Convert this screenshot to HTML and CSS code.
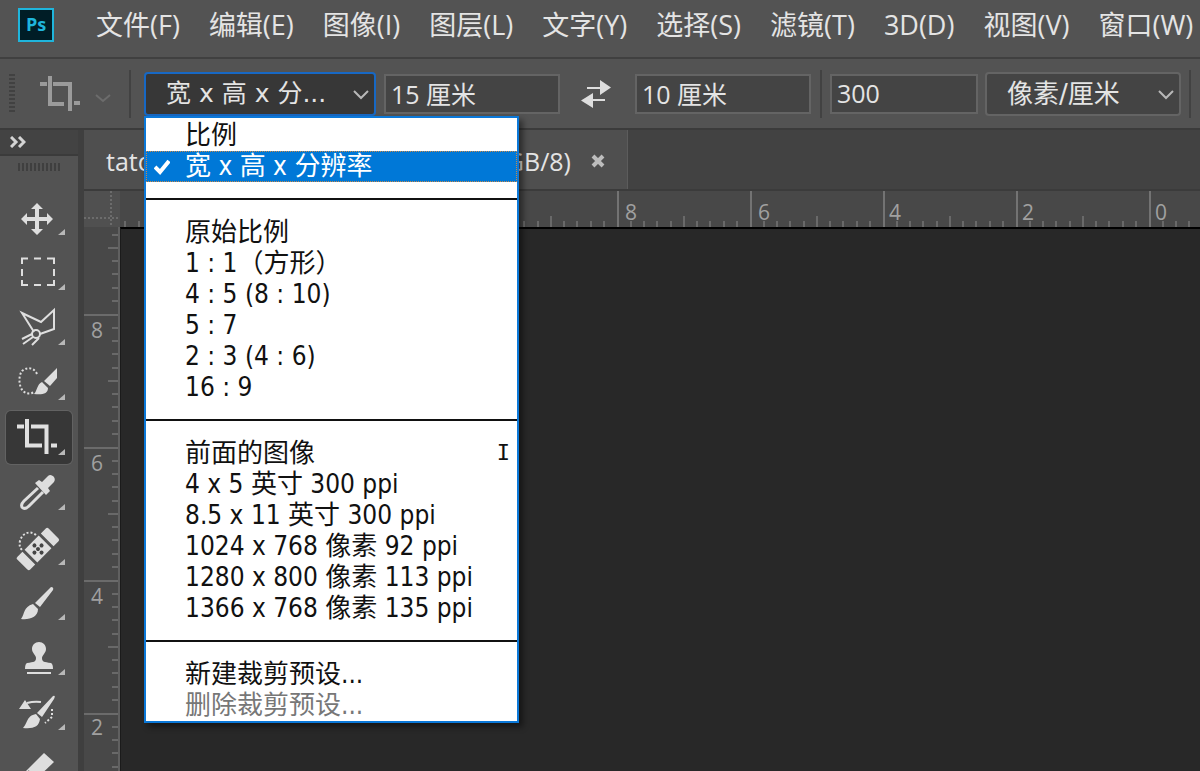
FILE: index.html
```html
<!DOCTYPE html>
<html lang="zh-CN">
<head>
<meta charset="utf-8">
<title>Photoshop</title>
<link rel="stylesheet" href="styles.css">
</head>
<body>
<div class="app">
  <header class="menubar">
    <svg class="logo" viewBox="0 0 36 34" role="img" aria-label="Ps">
      <rect x="1" y="1" width="34" height="32" fill="#001d26" stroke="#1fb5dc" stroke-width="2"/>
      <text x="18" y="23" text-anchor="middle" class="logo-text">Ps</text>
    </svg>
    <nav class="menus">
      <button>文件(F)</button>
      <button>编辑(E)</button>
      <button>图像(I)</button>
      <button>图层(L)</button>
      <button>文字(Y)</button>
      <button>选择(S)</button>
      <button>滤镜(T)</button>
      <button>3D(D)</button>
      <button>视图(V)</button>
      <button>窗口(W)</button>
    </nav>
  </header>

  <section class="options">
    <span class="grip"></span>
    <button class="current-tool" aria-label="裁剪工具">
      <svg width="72" height="40" viewBox="0 0 72 40">
        <path d="M0 10H7M13 10H30V37M10 2V30H24M34 29H40" fill="none" stroke="#9b9b9b" stroke-width="4"/>
        <path d="M56 21l7 6 7-6" fill="none" stroke="#6c6c6c" stroke-width="2"/>
      </svg>
    </button>
    <span class="divider"></span>
    <div class="combo ratio">
      <select class="open" aria-label="裁剪预设"><option>宽 x 高 x 分...</option></select>
      <svg class="chevron" viewBox="0 0 16 10"><path d="M1 1l7 7 7-7"/></svg>
      <ul class="popup" role="menu">
        <li><button role="menuitem">比例</button></li>
        <li><button role="menuitem" class="selected"><svg class="check" viewBox="0 0 16 16"><path d="M1 8l5 5 9-11" fill="none" stroke="#fff" stroke-width="4"/></svg>宽 x 高 x 分辨率</button></li>
        <li class="rule" role="separator"></li>
        <li><button role="menuitem">原始比例</button></li>
        <li><button role="menuitem">1 : 1（方形）</button></li>
        <li><button role="menuitem">4 : 5 (8 : 10)</button></li>
        <li><button role="menuitem">5 : 7</button></li>
        <li><button role="menuitem">2 : 3 (4 : 6)</button></li>
        <li><button role="menuitem">16 : 9</button></li>
        <li class="rule" role="separator"></li>
        <li><button role="menuitem">前面的图像<kbd>I</kbd></button></li>
        <li><button role="menuitem">4 x 5 英寸 300 ppi</button></li>
        <li><button role="menuitem">8.5 x 11 英寸 300 ppi</button></li>
        <li><button role="menuitem">1024 x 768 像素 92 ppi</button></li>
        <li><button role="menuitem">1280 x 800 像素 113 ppi</button></li>
        <li><button role="menuitem">1366 x 768 像素 135 ppi</button></li>
        <li class="rule" role="separator"></li>
        <li><button role="menuitem">新建裁剪预设...</button></li>
        <li><button role="menuitem" disabled>删除裁剪预设...</button></li>
      </ul>
    </div>
    <input class="field" aria-label="宽度" value="15 厘米">
    <button class="swap" aria-label="交换高度和宽度">
      <svg width="30" height="28" viewBox="0 0 30 28"><path d="M6 7H19V0L30 7.500L19 15V9H6ZM24 19H12V13L0 20.500L12 28V21H24Z" fill="#dedede"/></svg>
    </button>
    <input class="field" aria-label="高度" value="10 厘米">
    <span class="divider"></span>
    <input class="field resolution" aria-label="分辨率" value="300">
    <div class="combo unit">
      <select aria-label="单位"><option>像素/厘米</option></select>
      <svg class="chevron" viewBox="0 0 16 10"><path d="M1 1l7 7 7-7"/></svg>
    </div>
    <span class="divider"></span>
  </section>

  <div class="workspace">
    <aside class="toolbar">
      <button class="collapse" aria-label="展开面板">
        <svg width="16" height="12" viewBox="0 0 16 12"><path d="M1 1l5 5-5 5M9 1l5 5-5 5" fill="none" stroke="#d4d4d4" stroke-width="3"/></svg>
      </button>
      <span class="tool-grip"></span>
      <div class="tools">
        <button aria-label="移动工具"><svg viewBox="0 0 66 53"><path d="M31 12l6 6h-4v8h8v-4l6 6-6 6v-4h-8v8h4l-6 6-6-6h4v-8h-8v4l-6-6 6-6v4h8v-8h-4z"/><path class="corner" d="M59 38v6h-7z"/></svg></button>
        <button aria-label="选框工具"><svg viewBox="0 0 66 53"><path class="line" d="M16 18V12.500H22M28 12.500H35M41 12.500H48V18M48 23V30M48 34V39H41M35 39H28M22 39H16V34M16 30V23"/><path class="corner" d="M59 38v6h-7z"/></svg></button>
        <button aria-label="套索工具"><svg viewBox="0 0 66 53"><path class="line" d="M28 31L16 12L35 21L48 9V28L34 33M26 33L16 38M27 36L17 43M33 37L26 44"/><circle class="line" cx="30" cy="33" r="4"/><path class="corner" d="M59 38v6h-7z"/></svg></button>
        <button aria-label="快速选择工具"><svg viewBox="0 0 66 53"><path class="dots" d="M31 18C28 11 20 11 16 15C12 20 13 31 17 35C20 38 25 38 28 36"/><path d="M51 12V22L44 30L38 25ZM36 26L42 32C42 38 36 39 28 38C31 35 31 28 36 26Z"/><path class="corner" d="M59 38v6h-7z"/></svg></button>
        <button class="active" aria-label="裁剪工具"><svg viewBox="0 0 66 53"><path d="M11 15.500H18M25 15.500H40.500V43M21 8V34.500H36M45 34.500H51" fill="none" stroke="#e0e0e0" stroke-width="4"/><path class="corner" d="M59 38v6h-7z"/></svg></button>
        <button aria-label="吸管工具"><svg viewBox="0 0 66 53"><path class="line wide" d="M32 22L18 35C15 38 15 41 17 42C19 43 21 42 23 40L37 26"/><path d="M29 17L33 14L36 16L42 10C45 7 51 12 48 16L42 22L44 25L40 29Z"/><path class="corner" d="M59 38v6h-7z"/></svg></button>
        <button aria-label="修复画笔工具"><svg viewBox="0 0 66 53"><path class="dots" d="M30 14C24 9 16 12 14 20C13 24 14 27 16 29"/><g transform="translate(32 28) rotate(-45)"><path d="M-22-8Q-22-9-20-9H-13V9H-20Q-22 9-22 7ZM-10-9H10V9H-10ZM13-9H20Q22-9 22-7V7Q22 9 20 9H13Z"/><g fill="#444"><circle cx="0" cy="0" r="2"/><circle cx="-5" cy="0" r="2"/><circle cx="5" cy="0" r="2"/><circle cx="0" cy="-5" r="2"/><circle cx="0" cy="5" r="2"/></g></g><path class="corner" d="M59 38v6h-7z"/></svg></button>
        <button aria-label="画笔工具"><svg viewBox="0 0 66 53"><path d="M45 11Q48 11 47 14L34 31L29 27ZM27 28L32 33C32 41 24 44 15 43C19 38 17 31 27 28Z"/><path class="corner" d="M59 38v6h-7z"/></svg></button>
        <button aria-label="仿制图章工具"><svg viewBox="0 0 66 53"><path d="M33 11C37 11 40 14 40 18C40 22 36 24 36 27C36 31 38 31 45 32Q47 33 47 38H19Q19 33 21 32C28 31 30 31 30 27C30 24 26 22 26 18C26 14 29 11 33 11ZM21 41H45V43H21Z"/><path class="corner" d="M59 38v6h-7z"/></svg></button>
        <button aria-label="历史记录画笔工具"><svg viewBox="0 0 66 53"><path d="M47 10Q50 9 48 13L36 31L31 27ZM30 28L34 33C33 41 27 43 17 42C22 37 20 30 30 28ZM13 23L19 14L25 23Z"/><path class="line" d="M21 17Q28 15 35 16"/><path class="dots" d="M46 23V31L39 37"/><path class="corner" d="M59 38v6h-7z"/></svg></button>
        <button aria-label="橡皮擦工具"><svg viewBox="0 0 66 53"><path d="M38 12L48 21L25 43L14 36Z"/><path d="M22 30L29 36" stroke="#535353" stroke-width="2"/></svg></button>
      </div>
    </aside>

    <main class="document">
      <div class="tabs">
        <div class="tab">
          <span>tato</span>
          <span class="mode">(RGB/8)</span>
          <button aria-label="关闭"><svg width="14" height="14" viewBox="0 0 14 14"><path d="M2 2l10 10M12 2L2 12" stroke="#bdbdbd" stroke-width="4"/></svg></button>
        </div>
      </div>
      <div class="view">
        <div class="origin"><svg width="36" height="36" viewBox="0 0 36 36"><path d="M27 0V36M0 27H36" fill="none" stroke="#6c6c6c" stroke-width="2" stroke-dasharray="2 2"/></svg></div>
        <svg class="ruler-x">
          <defs><pattern id="px" x="-35" width="133" height="36" patternUnits="userSpaceOnUse">
            <path d="M1 0V36" stroke="#737373" stroke-width="2"/>
            <path d="M14 30V36M27 30V36M40 30V36M54 30V36M67 25V36M80 30V36M93 30V36M107 30V36M120 30V36" stroke="#696969" stroke-width="2"/>
          </pattern></defs>
          <rect width="100%" height="36" fill="url(#px)"/>
          <text x="505" y="29">8</text><text x="638" y="29">6</text><text x="769" y="29">4</text><text x="902" y="29">2</text><text x="1035" y="29">0</text>
        </svg>
        <svg class="ruler-y">
          <defs><pattern id="py" y="87" width="36" height="133" patternUnits="userSpaceOnUse">
            <path d="M0 1H36" stroke="#6b6b6b" stroke-width="2"/>
            <path d="M28 14H36M28 27H36M28 40H36M28 54H36M24 67H36M28 80H36M28 93H36M28 107H36M28 120H36" stroke="#696969" stroke-width="2"/>
          </pattern></defs>
          <rect width="36" height="100%" fill="url(#py)"/>
          <path d="M35 0V900" stroke="#606060" stroke-width="2"/>
          <text x="7" y="111">8</text><text x="7" y="244">6</text><text x="7" y="377">4</text><text x="7" y="508">2</text>
        </svg>
        <div class="canvas"></div>
      </div>
    </main>
  </div>
</div>
</body>
</html>
```
FILE: styles.css
```css
* {
  box-sizing: border-box;
}

body {
  margin: 0;
  background: #282828;
  color: #e4e4e4;
  font-family: "Open Sans", "Noto Sans CJK SC", sans-serif;
  font-size: 25px;
  line-height: 30px;
}

button,
input,
select {
  margin: 0;
  padding: 0;
  border: 0;
  background: none;
  color: inherit;
  font: inherit;
}

svg {
  display: block;
}

.app {
  display: flex;
  flex-direction: column;
  height: 100vh;
  overflow: hidden;
}

.menubar {
  display: flex;
  flex: none;
  align-items: center;
  height: 59px;
  padding: 0 0 8px 18px;
  border-bottom: 2px solid #404040;
  background: #535353;
}

.logo {
  flex: none;
  width: 36px;
  height: 34px;
}

.logo-text {
  fill: #1fb5dc;
  font-size: 18px;
  font-weight: 700;
}

.menus {
  display: flex;
  gap: 29px;
  margin-left: 42px;
  font-size: 27px;
  white-space: nowrap;
}

.options {
  display: flex;
  flex: none;
  align-items: center;
  height: 71px;
  padding-left: 9px;
  border-bottom: 2px solid #3b3b3b;
  background: #535353;
}

.grip {
  width: 6px;
  height: 40px;
  background: repeating-linear-gradient(#414141 0 2px, #535353 2px 4px);
}

.current-tool {
  margin-left: 25px;
}

.divider {
  flex: none;
  width: 2px;
  height: 48px;
  background: #424242;
}

.current-tool + .divider {
  margin: 0 13px 0 17px;
}

.combo {
  position: relative;
  flex: none;
}

.combo select {
  width: 100%;
  height: 44px;
  padding: 0 36px 0 20px;
  border: 2px solid #646464;
  border-radius: 4px;
  background: #444;
  font-family: "DejaVu Sans", "Noto Sans CJK SC", sans-serif;
  appearance: none;
}

.combo select.open {
  border-color: #1768c4;
  background: #373737;
}

.ratio {
  width: 232px;
  margin-right: 8px;
}

.chevron {
  position: absolute;
  top: 18px;
  right: 7px;
  width: 16px;
  height: 10px;
  fill: none;
  stroke: #b8b8b8;
  stroke-width: 2px;
}

.field {
  width: 176px;
  height: 40px;
  padding: 0 5px 1px;
  border: 2px solid #646464;
  background: #444;
}

.resolution {
  width: 148px;
  margin: 0 7px 0 8px;
}

.swap {
  margin: 0 24px 0 21px;
}

.field + .divider {
  margin-left: 9px;
}

.unit {
  width: 196px;
  margin-right: 8px;
}

.unit select {
  font-size: 26px;
}

.popup {
  position: absolute;
  z-index: 2;
  top: 44px;
  left: 0;
  width: 375px;
  margin: 0;
  padding: 2px 0 0;
  border: 2px solid #0b78d8;
  background: #fff;
  box-shadow: 4px 4px 6px rgba(0, 0, 0, 0.45);
  color: #111;
  font-family: "DejaVu Sans Condensed", "Noto Sans CJK SC", sans-serif;
  font-size: 26px;
  list-style: none;
}

.popup button {
  position: relative;
  display: flex;
  align-items: center;
  width: 100%;
  height: 31px;
  padding: 0 7px 0 39px;
  white-space: pre;
  text-align: left;
}

.popup .selected {
  outline: 1px dotted #c98a4a;
  outline-offset: -1px;
  background: #0078d7;
  color: #fff;
}

.popup button:disabled {
  color: #777;
}

.popup kbd {
  margin-left: auto;
  font-family: "DejaVu Sans Mono", monospace;
  font-size: 22px;
}

.check {
  position: absolute;
  top: 8px;
  left: 8px;
  width: 16px;
  height: 16px;
}

.rule {
  height: 35px;
  padding: 16px 0 17px;
  background: #111 content-box;
}

.workspace {
  display: flex;
  flex: 1;
  min-height: 0;
}

.toolbar {
  flex: none;
  width: 84px;
  overflow: hidden;
  border-right: 6px solid #3f3f3f;
  background: #535353;
}

.collapse {
  display: flex;
  align-items: center;
  width: 100%;
  height: 26px;
  padding-left: 10px;
  border-bottom: 2px solid #3b3b3b;
  background: #434343;
}

.tool-grip {
  display: block;
  width: 42px;
  height: 8px;
  margin: 7px 0 20px 18px;
  background: repeating-linear-gradient(90deg, #3f3f3f 0 2px, #535353 2px 4px);
}

.tools {
  display: flex;
  flex-direction: column;
  gap: 2px;
  padding: 0 6px;
}

.tools button {
  flex: none;
  height: 53px;
  border-radius: 5px;
}

.tools .active {
  background: #373737;
  box-shadow: 0 0 0 1px #626262;
}

.tools svg {
  width: 66px;
  height: 53px;
  fill: #dedede;
}

.tools .line {
  fill: none;
  stroke: #dedede;
  stroke-width: 2px;
}

.tools .wide {
  stroke-width: 3px;
}

.tools .dots {
  fill: none;
  stroke: #dedede;
  stroke-width: 2px;
  stroke-dasharray: 2 2;
}

.tools .corner {
  fill: #b8b8b8;
}

.document {
  display: flex;
  flex: 1;
  flex-direction: column;
  min-width: 0;
}

.tabs {
  display: flex;
  flex: none;
  height: 61px;
  border-bottom: 2px solid #3b3b3b;
  background: #424242;
}

.tab {
  display: flex;
  align-items: center;
  width: 544px;
  padding: 2px 22px 0;
  border-right: 1px solid #5c5c5c;
  background: #4f4f4f;
}

.mode {
  margin-left: auto;
}

.tab button {
  margin-left: 20px;
}

.view {
  display: grid;
  flex: 1;
  grid-template-columns: 36px 1fr;
  grid-template-rows: 36px 1fr;
  min-height: 0;
}

.origin {
  background: #505050;
}

.ruler-x,
.ruler-y {
  width: 100%;
  height: 100%;
  background: #484848;
  fill: #a0a0a0;
  font-size: 21px;
}

.canvas {
  border-top: 2px solid #000;
  border-left: 1px solid #1b1b1b;
  background: #282828;
}
```
